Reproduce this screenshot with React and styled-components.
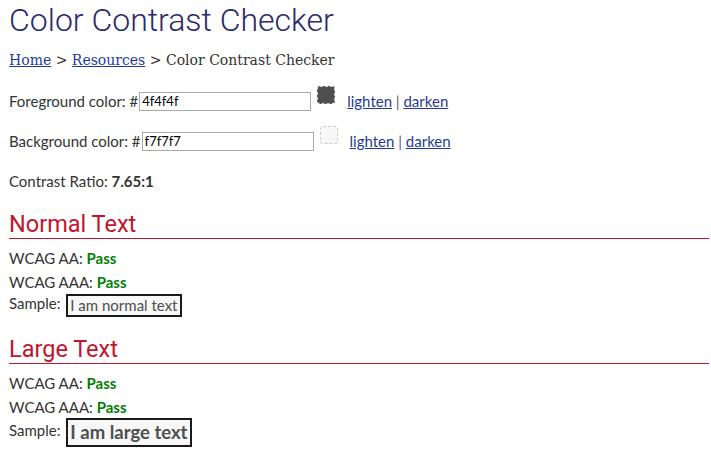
import React from 'react';
import styled, { createGlobalStyle } from 'styled-components';

const GlobalStyle = createGlobalStyle`
  body {
    margin: 0;
    background: #ffffff;
    font-family: 'Lato', 'Open Sans', sans-serif;
    color: #333333;
  }
`;

const Page = styled.div`
  padding: 0 2px 0 9px;
  font-size: 15px;
`;

const Title = styled.h1`
  margin: 0;
  padding-top: 1px;
  font-family: 'Roboto', sans-serif;
  font-weight: 300;
  font-size: 32px;
  line-height: 38px;
  color: #2b2a6b;
`;

const Crumbs = styled.div`
  margin-top: 11px;
  font-family: 'DejaVu Serif', serif;
  font-size: 14px;
  line-height: 20px;
  color: #333333;

  a {
    color: #1f3c95;
  }
`;

const ColorRow = styled.div`
  display: flex;
  align-items: center;
  height: 20px;
  margin-top: ${p => p.$top}px;
`;

const Label = styled.span`
  margin-right: 1px;
`;

const HexInput = styled.input`
  box-sizing: border-box;
  width: 172px;
  height: 19px;
  padding: 0 2px;
  border: 1px solid #a9a9a9;
  font-family: 'Lato', sans-serif;
  font-size: 13px;
  color: #000000;
  background: #ffffff;
  outline: none;
`;

const Swatch = styled.span`
  box-sizing: border-box;
  width: 18px;
  height: 18px;
  margin: 0 12px 0 6px;
  align-self: flex-start;
  margin-top: -5px;
  border: 1px dashed #cccccc;
  border-radius: 3px;
  background: ${p => p.$color};
`;

const Links = styled.span`
  color: #5a5a8a;

  a {
    color: #1f3c95;
  }
`;

const Ratio = styled.div`
  margin-top: 20px;
  line-height: 20px;

  b {
    color: #333333;
  }
`;

const SectionTitle = styled.h2`
  margin: ${p => p.$top}px 0 0;
  padding-bottom: 0;
  font-family: 'Roboto', sans-serif;
  font-weight: 400;
  font-size: 23.5px;
  line-height: 28px;
  color: #c1152d;
  border-bottom: 1px solid #c1152d;
`;

const Line = styled.div`
  margin-top: ${p => p.$top}px;
  line-height: 20px;
`;

const PassText = styled.b`
  color: #008000;
`;

const SampleBox = styled.span`
  display: inline-block;
  padding: 0 2px;
  margin-left: 2px;
  border: 2px solid #1a1a1a;
  background: #f7f7f7;
  color: #4f4f4f;
  font-size: ${p => (p.$large ? '18.5px' : '15px')};
  font-weight: ${p => (p.$large ? 700 : 400)};
  line-height: ${p => (p.$large ? '25px' : '19px')};
  vertical-align: middle;
`;

const colors = [
  { label: 'Foreground color: #', value: '4f4f4f', swatch: '#4f4f4f', top: 21 },
  { label: 'Background color: #', value: 'f7f7f7', swatch: '#f7f7f7', top: 20 },
];

const Section = ({ title, top, large }) => (
  <>
    <SectionTitle $top={top}>{title}</SectionTitle>
    <Line $top={9}>WCAG AA: <PassText>Pass</PassText></Line>
    <Line $top={4}>WCAG AAA: <PassText>Pass</PassText></Line>
    <Line $top={1}>
      Sample: <SampleBox $large={large}>{large ? 'I am large text' : 'I am normal text'}</SampleBox>
    </Line>
  </>
);

export default function App() {
  return (
    <Page>
      <GlobalStyle />
      <Title>Color Contrast Checker</Title>
      <Crumbs>
        <a href="#">Home</a> &gt; <a href="#">Resources</a> &gt; Color Contrast Checker
      </Crumbs>
      {colors.map(c => (
        <ColorRow key={c.value} $top={c.top}>
          <Label>{c.label}</Label>
          <HexInput defaultValue={c.value} />
          <Swatch $color={c.swatch} />
          <Links>
            <a href="#">lighten</a> | <a href="#">darken</a>
          </Links>
        </ColorRow>
      ))}
      <Ratio>
        Contrast Ratio: <b>7.65:1</b>
      </Ratio>
      <Section title="Normal Text" top={19} />
      <Section title="Large Text" top={18} large />
    </Page>
  );
}
